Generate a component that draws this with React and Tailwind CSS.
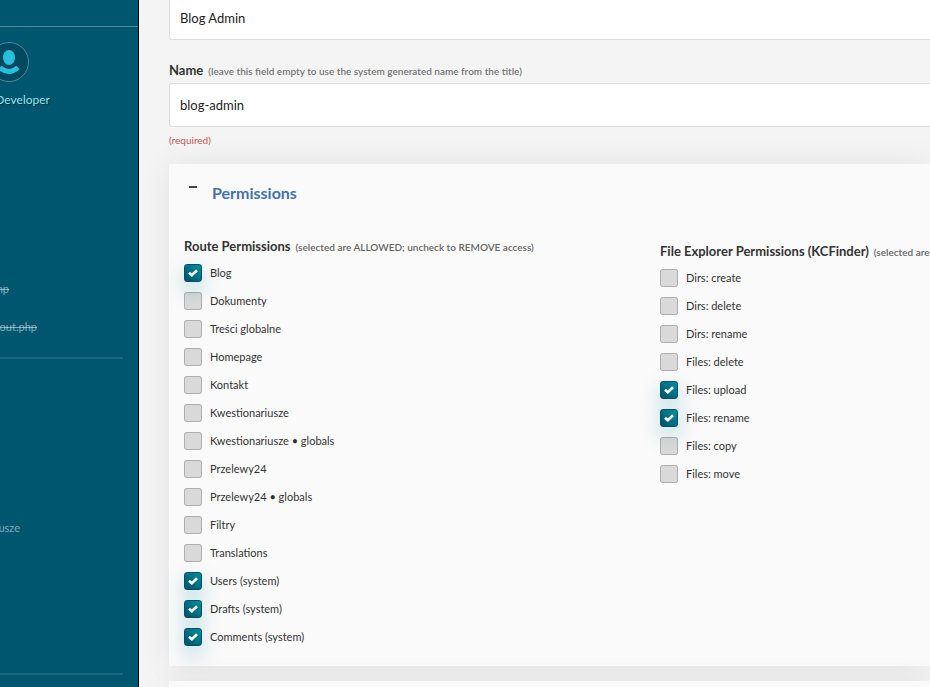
import React, { useState } from 'react';

const routePermissions = [
    { label: 'Blog', allowed: true },
    { label: 'Dokumenty', allowed: false },
    { label: 'Treści globalne', allowed: false },
    { label: 'Homepage', allowed: false },
    { label: 'Kontakt', allowed: false },
    { label: 'Kwestionariusze', allowed: false },
    { label: 'Kwestionariusze • globals', allowed: false },
    { label: 'Przelewy24', allowed: false },
    { label: 'Przelewy24 • globals', allowed: false },
    { label: 'Filtry', allowed: false },
    { label: 'Translations', allowed: false },
    { label: 'Users (system)', allowed: true },
    { label: 'Drafts (system)', allowed: true },
    { label: 'Comments (system)', allowed: true },
];

const filePermissions = [
    { label: 'Dirs: create', allowed: false },
    { label: 'Dirs: delete', allowed: false },
    { label: 'Dirs: rename', allowed: false },
    { label: 'Files: delete', allowed: false },
    { label: 'Files: upload', allowed: true },
    { label: 'Files: rename', allowed: true },
    { label: 'Files: copy', allowed: false },
    { label: 'Files: move', allowed: false },
];

const PermissionItem = ({ item }) => {
    const [checked, setChecked] = useState(item.allowed);

    return (
        <label className="flex h-7 items-center gap-2 text-[11px] text-[#333]">
            <span className="grid size-[18px] place-items-center">
                <input
                    type="checkbox"
                    checked={checked}
                    onChange={(e) => setChecked(e.target.checked)}
                    className="col-start-1 row-start-1 size-[18px] appearance-none rounded-[3px] border border-black/20 bg-black/13 checked:border-[#005066] checked:bg-transparent checked:bg-linear-to-bl checked:from-[#00909f] checked:to-[#005068] checked:shadow-[0_8px_20px_rgba(0,134,154,0.3)]"
                />
                {checked && (
                    <svg viewBox="0 0 10 8" className="pointer-events-none z-10 col-start-1 row-start-1 h-2 w-[10px]" fill="none" stroke="#fff" strokeWidth="2.6">
                        <path d="M1 3.8 L3.8 6.2 L9 1.2" />
                    </svg>
                )}
            </span>
            {item.label}
        </label>
    );
};

const PermissionGroup = ({ title, note, items, className }) => (
    <fieldset className={className}>
        <legend className="flex h-6 items-center gap-[5px] whitespace-nowrap">
            <span className="text-[13px] font-bold text-[#333]">{title}</span>
            <span className="text-[10px] font-semibold text-[#666]">{note}</span>
        </legend>
        {items.map((item) => (
            <PermissionItem key={item.label} item={item} />
        ))}
    </fieldset>
);

const Sidebar = () => (
    <aside className="flex w-[139px] shrink-0 flex-col border-r border-black bg-[#00566e] text-[11px] text-white/50">
        <div className="h-[27px] shrink-0 border-b border-white/30" />
        <div className="mt-[15px] flex w-[29px] justify-end">
            <svg viewBox="0 0 40 40" className="size-10 shrink-0" fill="none">
                <circle cx="20" cy="20" r="19.5" fill="#004a60" stroke="#4d8999" />
                <ellipse cx="20" cy="15.5" rx="6" ry="7.5" fill="#26bfde" />
                <path d="M11 25.5 Q20 33.5 29 25.5" stroke="#26bfde" strokeWidth="5" />
            </svg>
        </div>
        <div className="mt-2 flex h-5 w-[50px] items-center justify-end text-xs text-[#8eeaf9] [text-shadow:1px_1px_1px_rgba(0,0,0,0.5)]">Developer</div>
        <nav className="mt-[169px] flex flex-col">
            <a href="#" className="flex h-5 w-[9px] items-center justify-end line-through">hp</a>
            <a href="#" className="mt-[18px] flex h-5 w-[37px] items-center justify-end line-through">out.php</a>
            <hr className="mt-5 mr-[15px] border-t-2 border-white/10" />
            <a href="#" className="mt-[159px] flex h-5 w-5 items-center justify-end">usze</a>
            <hr className="mt-[135px] mr-[15px] border-t-2 border-white/10" />
        </nav>
    </aside>
);

const App = () => {
    const [title, setTitle] = useState('Blog Admin');
    const [name, setName] = useState('blog-admin');
    const [open, setOpen] = useState(true);

    return (
        <div className="flex h-screen overflow-hidden bg-[#f4f4f4] font-['Lato',sans-serif]">
            <Sidebar />
            <main className="-mt-1 min-w-0 flex-1 pl-[30px]">
                <input
                    aria-label="Title"
                    value={title}
                    onChange={(e) => setTitle(e.target.value)}
                    className="block h-11 w-full rounded-l-[3px] border border-r-0 border-[#ddd] bg-white px-[10px] text-[13px] text-[#222]"
                />
                <div className="mt-[19px] flex h-6 items-center gap-[5px]">
                    <label htmlFor="name" className="text-[13px] font-bold text-[#333]">Name</label>
                    <span className="text-[10px] font-semibold text-[#777]">(leave this field empty to use the system generated name from the title)</span>
                </div>
                <input
                    id="name"
                    value={name}
                    onChange={(e) => setName(e.target.value)}
                    className="block h-11 w-full rounded-l-[3px] border border-r-0 border-[#ddd] bg-white px-[10px] text-[13px] text-[#222]"
                />
                <p className="mt-[5px] text-[10px] leading-4 text-[#cd5454]">(required)</p>

                <section className="mt-4 bg-[#fafafa] px-[15px] pt-4 pb-[15px] shadow-[0_0_30px_rgba(0,0,0,0.07)]">
                    <h2 className="h-[26px]">
                        <button type="button" onClick={() => setOpen(!open)} className="flex h-[26px] items-center text-base font-bold text-[#4472ae]">
                            <span className="mb-3 ml-[5px] h-[2px] w-2 bg-[#444]" />
                            <span className="ml-[15px]">Permissions</span>
                        </button>
                    </h2>
                    {open && (
                        <div className="mt-[29px] flex">
                            <PermissionGroup
                                title="Route Permissions"
                                note="(selected are ALLOWED; uncheck to REMOVE access)"
                                items={routePermissions}
                                className="w-[476px] shrink-0"
                            />
                            <PermissionGroup
                                title="File Explorer Permissions (KCFinder)"
                                note="(selected are ALLOWED; uncheck to REMOVE access)"
                                items={filePermissions}
                                className="mt-[5px] min-w-0 flex-1"
                            />
                        </div>
                    )}
                </section>
                <section className="mt-[15px] h-10 bg-[#fafafa] shadow-[0_0_30px_rgba(0,0,0,0.07)]" />
            </main>
        </div>
    );
};

export default App;
